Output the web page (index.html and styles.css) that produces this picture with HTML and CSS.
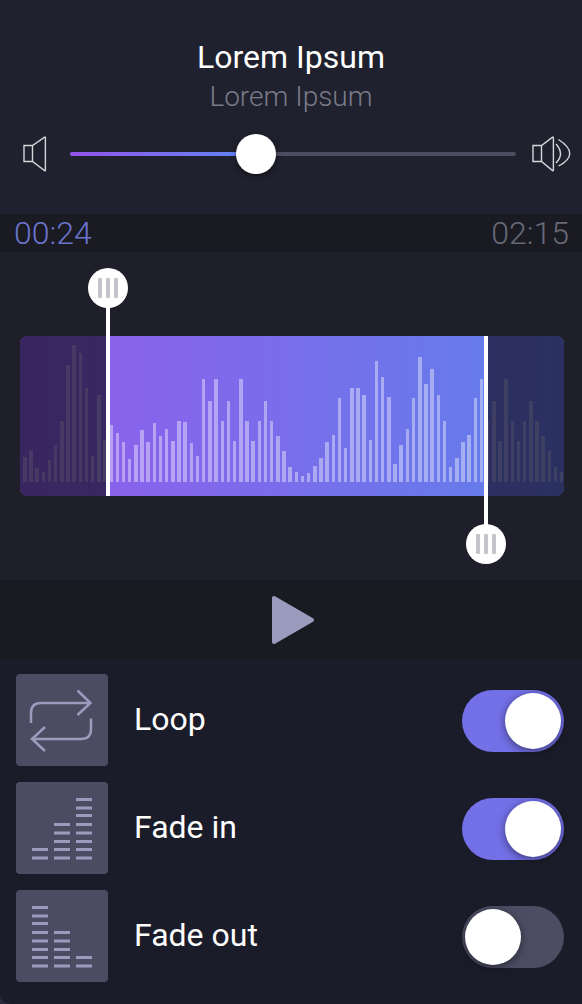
FILE: index.html
```html
<!DOCTYPE html>
<html lang="en">
<head>
    <meta charset="UTF-8">
    <title>Lorem Ipsum</title>
    <link rel="stylesheet" href="styles.css">
</head>
<body>
<div class="player">

    <div class="header">
        <div class="title">Lorem Ipsum</div>
        <div class="subtitle">Lorem Ipsum</div>
        <div class="volume">
            <svg class="speaker" width="24" height="36" viewBox="0 0 24 36">
                <path d="M1 9.5H9.5L21.6 1.2Q22.4 .8 22.4 1.8V34Q22.4 35 21.6 34.6L9.5 25.5H1Z"/>
                <path d="M9.5 9.5V25.5"/>
            </svg>
            <div class="track">
                <div class="track-fill"></div>
                <div class="track-knob"></div>
            </div>
            <svg class="speaker" width="40" height="36" viewBox="0 0 40 36">
                <path d="M1 9.5H9.5L20.6 1.2Q21.4 .8 21.4 1.8V34Q21.4 35 20.6 34.6L9.5 25.5H1Z"/>
                <path d="M9.5 9.5V25.5"/>
                <path d="M24 8Q33 18 24 27"/>
                <path d="M26.5 3.5Q49 18 26.5 30"/>
            </svg>
        </div>
    </div>

    <div class="times">
        <span class="time-now">00:24</span>
        <span class="time-total">02:15</span>
    </div>

    <div class="editor">
        <div class="wave">
            <div class="bars">
                <i style="height:25px"></i><i style="height:32px"></i><i style="height:14px"></i><i style="height:10px"></i><i style="height:22px"></i><i style="height:37px"></i><i style="height:61px"></i><i style="height:117px"></i><i style="height:137px"></i><i style="height:129px"></i><i style="height:94px"></i><i style="height:26px"></i><i style="height:87px"></i><i style="height:42px"></i><i style="height:57px"></i><i style="height:49px"></i><i style="height:40px"></i><i style="height:23px"></i><i style="height:37px"></i><i style="height:52px"></i><i style="height:40px"></i><i style="height:59px"></i><i style="height:46px"></i><i style="height:53px"></i><i style="height:41px"></i><i style="height:61px"></i><i style="height:60px"></i><i style="height:39px"></i><i style="height:26px"></i><i style="height:103px"></i><i style="height:81px"></i><i style="height:103px"></i><i style="height:61px"></i><i style="height:81px"></i><i style="height:41px"></i><i style="height:103px"></i><i style="height:61px"></i><i style="height:41px"></i><i style="height:61px"></i><i style="height:81px"></i><i style="height:61px"></i><i style="height:46px"></i><i style="height:31px"></i><i style="height:15px"></i><i style="height:10px"></i><i style="height:6px"></i><i style="height:9px"></i><i style="height:16px"></i><i style="height:24px"></i><i style="height:40px"></i><i style="height:47px"></i><i style="height:84px"></i><i style="height:34px"></i><i style="height:94px"></i><i style="height:94px"></i><i style="height:87px"></i><i style="height:42px"></i><i style="height:121px"></i><i style="height:105px"></i><i style="height:85px"></i><i style="height:18px"></i><i style="height:37px"></i><i style="height:53px"></i><i style="height:84px"></i><i style="height:125px"></i><i style="height:98px"></i><i style="height:113px"></i><i style="height:87px"></i><i style="height:61px"></i><i style="height:15px"></i><i style="height:24px"></i><i style="height:40px"></i><i style="height:47px"></i><i style="height:84px"></i><i style="height:103px"></i><i style="height:61px"></i><i style="height:81px"></i><i style="height:41px"></i><i style="height:103px"></i><i style="height:61px"></i><i style="height:41px"></i><i style="height:61px"></i><i style="height:81px"></i><i style="height:61px"></i><i style="height:46px"></i><i style="height:31px"></i><i style="height:15px"></i><i style="height:10px"></i>
            </div>
            <div class="dim dim-left"></div>
            <div class="dim dim-right"></div>
            <div class="handle handle-start"><div class="grip"><b></b><b></b><b></b></div></div>
            <div class="handle handle-end"><div class="grip"><b></b><b></b><b></b></div></div>
        </div>
    </div>

    <div class="transport">
        <svg width="44" height="50" viewBox="0 0 44 50">
            <path class="play" d="M3 3V47L41 25Z"/>
        </svg>
    </div>

    <div class="options">
        <div class="option">
            <div class="tile">
                <svg class="tile-icon" width="92" height="92" viewBox="0 0 92 92">
                    <path class="line" d="M15 49V39Q15 29 25 29H74.5M61.5 16.5L74.5 29L61.5 41M75 44.5V55Q75 65 65 65H16M29 77L16 65L29 53"/>
                </svg>
            </div>
            <span class="option-label">Loop</span>
            <div class="switch on"><div class="switch-knob"></div></div>
        </div>
        <div class="option">
            <div class="tile">
                <svg class="tile-icon" width="92" height="92" viewBox="0 0 92 92">
                    <g class="cells">
                        <rect x="60" y="16" width="16" height="3"/><rect x="60" y="24.5" width="16" height="3"/><rect x="60" y="32" width="16" height="3"/>
                        <rect x="38" y="41" width="16" height="3"/><rect x="60" y="41" width="16" height="3"/>
                        <rect x="38" y="49.5" width="16" height="3"/><rect x="60" y="49.5" width="16" height="3"/>
                        <rect x="38" y="58" width="16" height="3"/><rect x="60" y="58" width="16" height="3"/>
                        <rect x="16" y="66" width="16" height="3"/><rect x="38" y="66" width="16" height="3"/><rect x="60" y="66" width="16" height="3"/>
                        <rect x="16" y="74.5" width="16" height="3"/><rect x="38" y="74.5" width="16" height="3"/><rect x="60" y="74.5" width="16" height="3"/>
                    </g>
                </svg>
            </div>
            <span class="option-label">Fade in</span>
            <div class="switch on"><div class="switch-knob"></div></div>
        </div>
        <div class="option">
            <div class="tile">
                <svg class="tile-icon" width="92" height="92" viewBox="0 0 92 92">
                    <g class="cells">
                        <rect x="16" y="16" width="16" height="3"/><rect x="16" y="24.5" width="16" height="3"/><rect x="16" y="32" width="16" height="3"/>
                        <rect x="16" y="41" width="16" height="3"/><rect x="38" y="41" width="16" height="3"/>
                        <rect x="16" y="49.5" width="16" height="3"/><rect x="38" y="49.5" width="16" height="3"/>
                        <rect x="16" y="58" width="16" height="3"/><rect x="38" y="58" width="16" height="3"/>
                        <rect x="16" y="66" width="16" height="3"/><rect x="38" y="66" width="16" height="3"/><rect x="60" y="66" width="16" height="3"/>
                        <rect x="16" y="74.5" width="16" height="3"/><rect x="38" y="74.5" width="16" height="3"/><rect x="60" y="74.5" width="16" height="3"/>
                    </g>
                </svg>
            </div>
            <span class="option-label">Fade out</span>
            <div class="switch"><div class="switch-knob"></div></div>
        </div>
    </div>

</div>
</body>
</html>
```

FILE: styles.css
```css
body {
    margin: 0;
    background-color: #2a2a3e;
    font-family: Roboto, "Liberation Sans", sans-serif;
    color: #fff;
}

.player {
    width: 582px;
    height: 1004px;
    overflow: hidden;
}

/* title + volume */
.header {
    height: 214px;
    box-sizing: border-box;
    padding-top: 37px;
    background-color: #20212e;
    text-align: center;
}

.title {
    font-size: 32px;
    line-height: 40px;
}

.subtitle {
    font-size: 28px;
    font-weight: 300;
    line-height: 40px;
    color: #7a7b88;
}

.volume {
    display: flex;
    align-items: center;
    height: 40px;
    margin-top: 17px;
    padding-left: 23px;
}

.speaker {
    flex: none;
    fill: none;
    stroke: #d5d5da;
    stroke-width: 1.4;
}

.track {
    position: relative;
    width: 446px;
    height: 4px;
    margin: 0 16px 0 23px;
    border-radius: 2px;
    background-color: #4c4d63;
}

.track-fill {
    width: 186px;
    height: 4px;
    border-radius: 2px 0 0 2px;
    background: linear-gradient(90deg, #9454e8, #5e87f5);
}

.track-knob {
    position: absolute;
    left: 166px;
    top: -18px;
    width: 40px;
    height: 40px;
    border-radius: 50%;
    background-color: #fff;
    box-shadow: 0 2px 6px rgba(0, 0, 0, 0.45);
}

/* time strip */
.times {
    display: flex;
    justify-content: space-between;
    height: 38px;
    padding: 0 13px 0 14px;
    background-color: #191a22;
    font-size: 32px;
    font-weight: 300;
    line-height: 38px;
}

.time-now {
    color: #6b74cc;
}

.time-total {
    color: #686977;
}

/* waveform */
.editor {
    height: 328px;
    box-sizing: border-box;
    padding: 84px 18px 0 20px;
    background-color: #1e1f2a;
}

.wave {
    position: relative;
    height: 160px;
    border-radius: 8px;
    background: linear-gradient(90deg, #925cec, #5f80ea);
}

.bars {
    display: flex;
    justify-content: space-between;
    align-items: flex-end;
    height: 146px;
    padding: 0 0 0 3px;
}

.bars i {
    width: 3.5px;
    background-color: rgba(255, 255, 255, 0.4);
}

.dim {
    position: absolute;
    top: 0;
    bottom: 0;
    background-color: rgba(20, 15, 38, 0.7);
}

.dim-left {
    left: 0;
    width: 86px;
    border-radius: 8px 0 0 8px;
}

.dim-right {
    right: 0;
    width: 76px;
    border-radius: 0 8px 8px 0;
}

.handle {
    position: absolute;
    width: 4px;
    background-color: #fff;
}

.handle-start {
    left: 86px;
    top: -30px;
    bottom: 0;
}

.handle-end {
    left: 464px;
    top: 0;
    bottom: -30px;
}

.grip {
    position: absolute;
    left: -18px;
    display: flex;
    justify-content: center;
    align-items: center;
    gap: 4px;
    width: 40px;
    height: 40px;
    border-radius: 50%;
    background-color: #fff;
}

.handle-start .grip {
    top: -38px;
}

.handle-end .grip {
    bottom: -38px;
}

.grip b {
    width: 4px;
    height: 20px;
    border-radius: 1px;
    background-color: #c4c4ca;
}

/* play */
.transport {
    display: flex;
    justify-content: center;
    align-items: center;
    height: 79px;
    padding-left: 4px;
    background-color: #191a22;
}

.play {
    fill: #9a9bbd;
    stroke: #9a9bbd;
    stroke-width: 4;
    stroke-linejoin: round;
}

/* option rows */
.options {
    display: flex;
    flex-direction: column;
    gap: 16px;
    height: 345px;
    box-sizing: border-box;
    padding: 15px 18px 0 16px;
    border-radius: 0 0 0 10px;
    background-color: #1b1c29;
}

.option {
    display: flex;
    align-items: center;
    height: 92px;
}

.tile {
    width: 92px;
    height: 92px;
    border-radius: 4px;
    background-color: #4b4c62;
}

.tile-icon {
    display: block;
}

.line {
    fill: none;
    stroke: #9a9bbd;
    stroke-width: 2.5;
}

.cells {
    fill: #9a9bbd;
}

.option-label {
    flex: 1;
    margin-left: 26px;
    padding-bottom: 3px;
    font-size: 32px;
}

.switch {
    display: flex;
    align-items: center;
    width: 102px;
    height: 62px;
    box-sizing: border-box;
    margin-top: 2px;
    padding: 0 3px;
    border-radius: 31px;
    background-color: #4c4d63;
}

.switch.on {
    justify-content: flex-end;
    background-color: #7370e8;
}

.switch-knob {
    width: 56px;
    height: 56px;
    border-radius: 50%;
    background-color: #fff;
    box-shadow: 0 2px 8px rgba(0, 0, 0, 0.5);
}
```
